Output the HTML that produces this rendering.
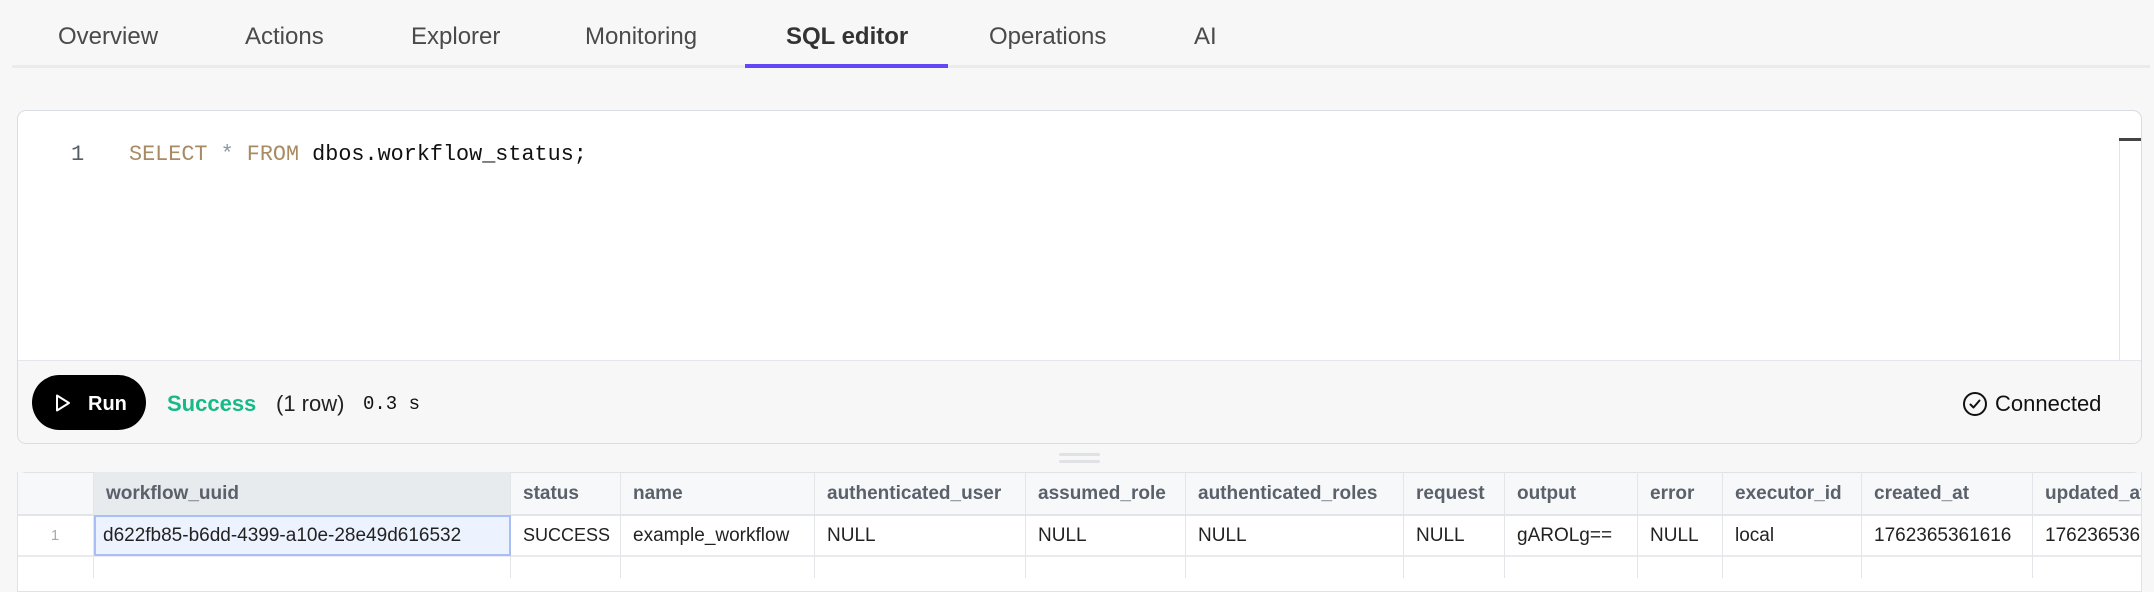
<!DOCTYPE html>
<html><head><meta charset="utf-8"><style>
*{box-sizing:border-box;margin:0;padding:0}
body{width:2154px;height:578px;background:#f7f7f7;font-family:"Liberation Sans",sans-serif;position:relative;overflow:hidden;color:#222}
.tab{position:absolute;top:23px;font-size:24px;color:#4a4a4a;white-space:nowrap}
.abs{position:absolute}
.hd{position:absolute;top:472px;height:43px;line-height:43px;font-size:19px;font-weight:bold;color:#5a616b;padding-left:12px;border-right:1px solid #e3e5e8;white-space:nowrap;overflow:hidden}
.cl{position:absolute;top:515px;height:41px;line-height:41px;font-size:19px;color:#222;padding-left:12px;border-right:1px solid #e3e5e8;white-space:nowrap;overflow:hidden}
.cl2{position:absolute;top:556px;height:22px;border-right:1px solid #e3e5e8}
.mono{font-family:"Liberation Mono",monospace}
</style></head><body>
<div class="tab" style="left:58px">Overview</div>
<div class="tab" style="left:245px">Actions</div>
<div class="tab" style="left:411px">Explorer</div>
<div class="tab" style="left:585px">Monitoring</div>
<div class="tab" style="left:786px;font-weight:bold;color:#333">SQL editor</div>
<div class="tab" style="left:989px">Operations</div>
<div class="tab" style="left:1194px">AI</div>
<div class="abs" style="left:12px;top:65px;width:2138px;height:3px;background:#ebebeb"></div>
<div class="abs" style="left:745px;top:64px;width:203px;height:4px;background:#6346f5"></div>

<div class="abs" style="left:17px;top:110px;width:2125px;height:334px;background:#fff;border:1px solid #d9dde3;border-radius:9px;overflow:hidden">
  <div class="abs mono" style="left:53px;top:31px;font-size:22px;color:#555d66">1</div>
  <div class="abs mono" style="left:111px;top:31px;font-size:21.8px;color:#111;white-space:pre"><span style="color:#a88b62">SELECT</span> <span style="color:#8798a8">*</span> <span style="color:#a88b62">FROM</span> dbos.workflow_status;</div>
  <div class="abs" style="left:2101px;top:27px;width:1px;height:222px;background:#e2e4e8"></div>
  <div class="abs" style="left:2101px;top:27px;width:24px;height:3px;background:#444"></div>
  <div class="abs" style="left:0;top:249px;width:2125px;height:85px;background:#f7f7f8;border-top:1px solid #e3e6ea"></div>
  <div class="abs" style="left:14px;top:264px;width:114px;height:55px;background:#000;border-radius:28px"></div>
  <svg class="abs" style="left:37px;top:283px" width="16" height="18" viewBox="0 0 16 18"><path d="M2 1.5 L14 9 L2 16.5 Z" fill="none" stroke="#fff" stroke-width="2" stroke-linejoin="round"/></svg>
  <div class="abs" style="left:70px;top:282px;font-size:20px;font-weight:bold;color:#fff">Run</div>
  <div class="abs" style="left:149px;top:280px;font-size:22px;font-weight:bold;color:#17b987">Success</div>
  <div class="abs" style="left:258px;top:280px;font-size:22px;color:#222">(1 row)</div>
  <div class="abs mono" style="left:345px;top:282px;font-size:19px;color:#111">0.3 s</div>
  <svg class="abs" style="left:1944px;top:280px" width="26" height="26" viewBox="0 0 26 26"><circle cx="13" cy="13" r="11" fill="none" stroke="#111" stroke-width="2"/><path d="M8.5 13.5 L11.5 16.5 L17.5 9.5" fill="none" stroke="#111" stroke-width="2" stroke-linecap="round" stroke-linejoin="round"/></svg>
  <div class="abs" style="left:1977px;top:280px;font-size:22px;color:#111">Connected</div>
</div>

<div class="abs" style="left:1059px;top:453px;width:41px;height:3px;background:#dfe1e5;border-radius:2px"></div>
<div class="abs" style="left:1059px;top:460px;width:41px;height:3px;background:#dfe1e5;border-radius:2px"></div>

<div class="abs" style="left:17px;top:472px;width:2125px;height:120px;background:#fff;border:1px solid #dfe2e6;border-radius:9px 9px 0 0;overflow:hidden"></div>
<div class="abs" style="left:18px;top:473px;width:2123px;height:42px;background:#f7f8fa"></div>
<div class="abs" style="left:18px;top:514px;width:2123px;height:2px;background:#e3e5e8"></div>
<div class="abs" style="left:18px;top:555px;width:2123px;height:2px;background:#e8eaed"></div>
<div class="hd" style="left:17px;width:77px;border-left:1px solid #dfe2e6"></div>
<div class="hd" style="left:94px;width:417px;background:#e8ebee">workflow_uuid</div>
<div class="hd" style="left:511px;width:110px">status</div>
<div class="hd" style="left:621px;width:194px">name</div>
<div class="hd" style="left:815px;width:211px">authenticated_user</div>
<div class="hd" style="left:1026px;width:160px">assumed_role</div>
<div class="hd" style="left:1186px;width:218px">authenticated_roles</div>
<div class="hd" style="left:1404px;width:101px">request</div>
<div class="hd" style="left:1505px;width:133px">output</div>
<div class="hd" style="left:1638px;width:85px">error</div>
<div class="hd" style="left:1723px;width:139px">executor_id</div>
<div class="hd" style="left:1862px;width:171px">created_at</div>
<div class="hd" style="left:2033px;width:109px;border-right:none">updated_at</div>

<div class="cl" style="left:17px;width:77px;padding:0;text-align:center;color:#aaa;font-size:15px">1</div>
<div class="cl" style="left:94px;width:417px;background:#edf2ff;border:2px solid #a9bff3;line-height:37px;padding-left:7px">d622fb85-b6dd-4399-a10e-28e49d616532</div>
<div class="cl" style="left:511px;width:110px;font-size:18px">SUCCESS</div>
<div class="cl" style="left:621px;width:194px">example_workflow</div>
<div class="cl" style="left:815px;width:211px">NULL</div>
<div class="cl" style="left:1026px;width:160px">NULL</div>
<div class="cl" style="left:1186px;width:218px">NULL</div>
<div class="cl" style="left:1404px;width:101px">NULL</div>
<div class="cl" style="left:1505px;width:133px">gAROLg==</div>
<div class="cl" style="left:1638px;width:85px">NULL</div>
<div class="cl" style="left:1723px;width:139px">local</div>
<div class="cl" style="left:1862px;width:171px">1762365361616</div>
<div class="cl" style="left:2033px;width:109px;border-right:none">1762365361616</div>

<div class="cl2" style="left:17px;width:77px"></div>
<div class="cl2" style="left:94px;width:417px"></div>
<div class="cl2" style="left:511px;width:110px"></div>
<div class="cl2" style="left:621px;width:194px"></div>
<div class="cl2" style="left:815px;width:211px"></div>
<div class="cl2" style="left:1026px;width:160px"></div>
<div class="cl2" style="left:1186px;width:218px"></div>
<div class="cl2" style="left:1404px;width:101px"></div>
<div class="cl2" style="left:1505px;width:133px"></div>
<div class="cl2" style="left:1638px;width:85px"></div>
<div class="cl2" style="left:1723px;width:139px"></div>
<div class="cl2" style="left:1862px;width:171px"></div>
<div class="abs" style="left:2141px;top:472px;width:1px;height:106px;background:#dfe2e6"></div>
</body></html>
